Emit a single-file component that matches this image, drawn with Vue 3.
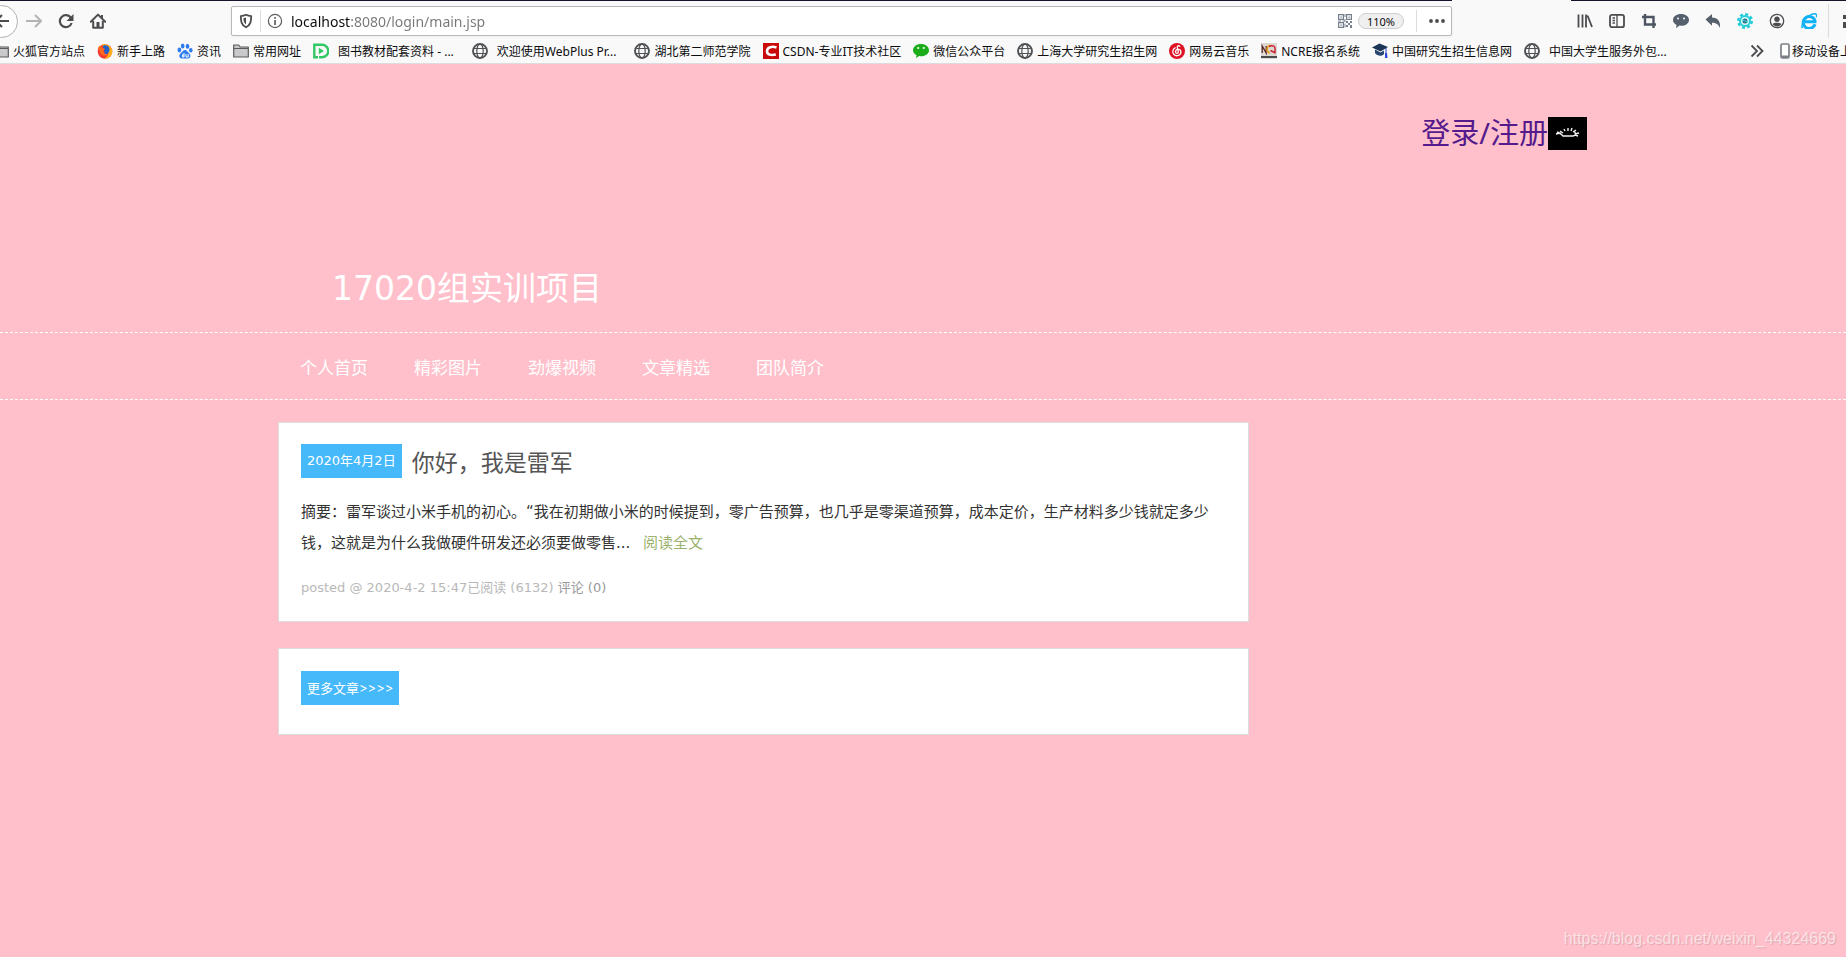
<script setup>
import { ref } from 'vue'

const address = ref('localhost:8080/login/main.jsp')

const bookmarks = [
  { icon: 'folder', label: '火狐官方站点' },
  { icon: 'firefox', label: '新手上路' },
  { icon: 'paw', label: '资讯' },
  { icon: 'folder', label: '常用网址' },
  { icon: 'play', label: '图书教材配套资料 - ...', wide: true },
  { icon: 'globe', label: '欢迎使用WebPlus Pr...', wide: true },
  { icon: 'globe', label: '湖北第二师范学院' },
  { icon: 'csdn', label: 'CSDN-专业IT技术社区' },
  { icon: 'chat', label: '微信公众平台' },
  { icon: 'globe', label: '上海大学研究生招生网' },
  { icon: 'music', label: '网易云音乐' },
  { icon: 'ncre', label: 'NCRE报名系统' },
  { icon: 'cap', label: '中国研究生招生信息网' },
  { icon: 'globe', label: '中国大学生服务外包...', wide: true },
]

const tools = [
  { icon: 'library', label: '书库' },
  { icon: 'sidebar', label: '侧栏' },
  { icon: 'crop', label: '截图' },
  { icon: 'bubble', label: '聊天' },
  { icon: 'undo', label: '撤销' },
  { icon: 'gear', label: '设置' },
  { icon: 'account', label: '账户' },
  { icon: 'ie', label: 'IE' },
]

const menu = ['个人首页', '精彩图片', '劲爆视频', '文章精选', '团队简介']
</script>

<template>
  <svg class="sprite" aria-hidden="true">
    <symbol id="i-back" viewBox="0 0 16 16"><path d="M15 8H2M8 2L2 8l6 6" fill="none" stroke="#4c4c4f" stroke-width="2" /></symbol>
    <symbol id="i-forward" viewBox="0 0 16 16"><path d="M0 8h14M9 2l6 6-6 6" fill="none" stroke="#b4b4b6" stroke-width="2" /></symbol>
    <symbol id="i-reload" viewBox="0 0 16 16"><path d="M13 5A6 6 0 1 0 13.600 10" fill="none" stroke="#4c4c4f" stroke-width="2.200" /><path d="M15.500 1v7H8.500z" fill="#4c4c4f" /></symbol>
    <symbol id="i-home" viewBox="0 0 16 16"><path d="M.8 8.800L8 1.600l7.200 7.200" fill="none" stroke="#4c4c4f" stroke-width="2" stroke-linecap="round" stroke-linejoin="round" /><path d="M3.200 8v6.800h9.600V8" fill="none" stroke="#4c4c4f" stroke-width="2" stroke-linejoin="round" /><path d="M6.500 9h3v6h-3zM11 2h2v4l-2-2z" fill="#4c4c4f" /></symbol>
    <symbol id="i-shield" viewBox="0 0 16 16"><path d="M8 1.800c1.800.9 3.600 1.200 5.200 1.300 0 5.400-.6 9-5.200 11.200C3.400 12.100 2.800 8.500 2.800 3.100 4.400 3 6.200 2.700 8 1.800z" fill="none" stroke="#4c4c4f" stroke-width="1.800" stroke-linejoin="round" /><path d="M8 4.500v7C6 10 5.500 8 5.400 5.200z" fill="#4c4c4f" /></symbol>
    <symbol id="i-info" viewBox="0 0 16 16"><circle cx="8" cy="8" r="6.600" fill="none" stroke="#5f5f62" stroke-width="1.200" /><path d="M7.200 7h1.700v5H7.200zM7.200 4h1.700v1.700H7.200z" fill="#5f5f62" /></symbol>
    <symbol id="i-qr" viewBox="0 0 14 14"><path d="M.6.6h4.800v4.800H.6zM8.600.6h4.800v4.800H8.600zM.6 8.600h4.800v4.800H.6z" fill="none" stroke="#75808d" stroke-width="1.200" /><path d="M2.400 2.400h1.400v1.400H2.400zM10.400 2.400h1.400v1.400h-1.400zM2.400 10.400h1.400v1.400H2.400zM6.500 0h1v3h-1zM6.500 5h1v3h-1zM0 6.500h3v1H0zM4.500 6.500h2v1h-2zM8 7h2v2H8zM10 9h2v2h-2zM12 7h2v2h-2zM8 11h2v2H8zM12 11h2v3h-2zM6.500 9.500h1v4h-1z" fill="#75808d" /></symbol>
    <symbol id="i-dots" viewBox="0 0 16 16"><g fill="#4c4c4f"><circle cx="2" cy="8" r="1.900" /><circle cx="8" cy="8" r="1.900" /><circle cx="14" cy="8" r="1.900" /></g></symbol>
    <symbol id="i-library" viewBox="0 0 16 16"><path d="M1.500 1.500v13M5.500 1.500v13M9 1.500v13M10.500 2.500L15 14" fill="none" stroke="#4c4c4f" stroke-width="1.800" /></symbol>
    <symbol id="i-sidebar" viewBox="0 0 16 16"><rect x="1" y="1.800" width="14" height="12.400" rx="2" fill="none" stroke="#4c4c4f" stroke-width="1.800" /><path d="M8 2v12M3.500 5H6M3.500 7.500H6M3.500 10H6" stroke="#4c4c4f" stroke-width="1.300" /></symbol>
    <symbol id="i-crop" viewBox="0 0 16 16"><path d="M4 1v10.500h8.500M1 4h11.500v11M12.500 11.500H15" fill="none" stroke="#4c5561" stroke-width="2.400" /></symbol>
    <symbol id="i-bubble" viewBox="0 0 16 16"><path d="M8 1c4.500 0 8 2.400 8 5.900s-3.500 5.800-8 5.800l-1.500-.1L3 15.200l.6-3.300C1.300 10.800 0 9 0 7c0-3.600 3.500-6 8-6z" fill="#56606d" /><circle cx="5" cy="5.500" r="1" fill="#f9f9fa" /><circle cx="11" cy="5.500" r="1" fill="#f9f9fa" /></symbol>
    <symbol id="i-undo" viewBox="0 0 16 16"><path d="M.5 6.500l6.500-5.500v3.400c5.500.2 8.800 3.600 8 10.600-1.500-3.700-3.900-5.200-8-5.200v3z" fill="#56606d" /></symbol>
    <symbol id="i-gear" viewBox="0 0 16 16"><circle cx="8" cy="8" r="6.700" fill="none" stroke="#25cdd8" stroke-width="2.600" stroke-dasharray="3 2.260" /><circle cx="8" cy="8" r="5" fill="#dff8fa" stroke="#25cdd8" stroke-width="2" /><circle cx="8" cy="8" r="2.500" fill="#2d7185" /><path d="M5 7l6 2" stroke="#3ddbe4" /></symbol>
    <symbol id="i-account" viewBox="0 0 16 16"><circle cx="8" cy="8" r="6.700" fill="none" stroke="#4c4c4f" stroke-width="1.300" /><circle cx="8" cy="6.300" r="2.700" fill="#4c4c4f" /><path d="M3.500 11c1.500-1.700 7.500-1.700 9 0-2 3.200-7 3.200-9 0z" fill="#4c4c4f" /></symbol>
    <symbol id="i-ie" viewBox="0 0 16 16"><path d="M14 11.200A6 6 0 1 1 14 7.800v1H4" fill="none" stroke="#10b1f5" stroke-width="3" /><path d="M1.500 15C-1 12 6 1.500 13.500.8c2-.2 2.600 1.200 1.800 3.400" fill="none" stroke="#10b1f5" stroke-width="1.400" /></symbol>
    <symbol id="i-folder" viewBox="0 0 16 16"><path d="M.7 14V2h5l1.500 2h8.100v10z" fill="#c9c9cb" stroke="#5b5b5e" stroke-width="1.200" stroke-linejoin="round" /><path d="M1 5.500h14" stroke="#5b5b5e" /></symbol>
    <symbol id="i-firefox" viewBox="0 0 16 16"><circle cx="8" cy="8.500" r="7.300" fill="#f2382f" /><path d="M5 1.500C9 0 15.500 3 15.300 9c-.4 5-5 7-8.500 6.500C11 14 12 11 11 8 9 4 6 5 5 1.500z" fill="#ffb01f" /><path d="M6.500 2.500C10 1.500 13 4 12.500 7.500c-.5 3-3.500 4.500-5.500 3.500 1-1 1-2 0-3-1-2-1.500-4-.5-5.500z" fill="#2160c8" /><path d="M.8 5L3 2.500 6 5l2 1-2 2 2 3 3 0c-2 3-7 2-8-2z" fill="#ff6a20" /></symbol>
    <symbol id="i-paw" viewBox="0 0 16 16"><g fill="#2f7cf0"><ellipse cx="2.400" cy="7" rx="1.900" ry="2.400" /><ellipse cx="5.700" cy="3" rx="1.800" ry="2.500" /><ellipse cx="10.500" cy="3.200" rx="1.800" ry="2.500" /><ellipse cx="13.800" cy="7.200" rx="1.800" ry="2.300" /><path d="M8 7c2 0 2.700 2 4.300 3.500 2 1.800 1.200 5-1.300 5-1.500 0-4.500 0-6 0-3 0-3.500-3.500-1.500-5C5.300 9 6 7 8 7z" /></g><path d="M7 10v4H5.500v-2.200H7M9 11v3h2.200v-3" fill="none" stroke="#fff" /></symbol>
    <symbol id="i-play" viewBox="0 0 16 16"><path d="M5 14.300H1.300V1.700H9a6 6 0 0 1 0 12.600H6" fill="none" stroke="#32c864" stroke-width="2.400" /><path d="M5.800 4.800L11 8l-5.200 3.200z" fill="#32c864" /></symbol>
    <symbol id="i-globe" viewBox="0 0 16 16"><circle cx="8" cy="8" r="7" fill="none" stroke="#4f5255" stroke-width="1.900" /><ellipse cx="8" cy="8" rx="3.200" ry="7" fill="none" stroke="#4f5255" stroke-width="1.200" /><path d="M1.500 5.500h13M1.500 10.500h13" stroke="#4f5255" stroke-width="1.200" /></symbol>
    <symbol id="i-csdn" viewBox="0 0 16 16"><path d="M0 0h16v16H0z" fill="#c90a0a" /><path d="M13.500 4.500C9 3 4.300 4 4 8c-.2 4 4.500 4.500 8.800 3.500" fill="none" stroke="#fff" stroke-width="2.600" /></symbol>
    <symbol id="i-chat" viewBox="0 0 16 16"><path d="M8 1c4.500 0 8 2.700 8 6.300s-3.500 6-8 6l-1.800-.2L3 15l.5-2.800C1.300 11 0 9.300 0 7.300 0 3.700 3.500 1 8 1z" fill="#1aad19" /><circle cx="5.200" cy="5" r="1.100" fill="#fff" /><circle cx="10.800" cy="5" r="1.100" fill="#fff" /></symbol>
    <symbol id="i-music" viewBox="0 0 16 16"><circle cx="8" cy="8" r="8" fill="#dd1224" /><path d="M10.800 3.200C9.500 2.200 8 3 8.300 4.500l1 4.200c.3 2-2.600 2.200-2.700.3C6.500 7 8 6 9.800 6.300c3 .6 3 5.700-1.300 6.400-3 .4-5-2-4.700-4.500.2-1.600 1-2.800 2.400-3.400" fill="none" stroke="#fff" stroke-width="1.300" stroke-linecap="round" /></symbol>
    <symbol id="i-ncre" viewBox="0 0 16 16"><path d="M0 0h16v16H0z" fill="#ddd9d2" /><path d="M1.200 10V3l4 7V3" fill="none" stroke="#5a2926" stroke-width="1.300" /><path d="M10 2.500C5 2.500 5 10 9 9.500" fill="none" stroke="#e3a226" stroke-width="1.700" /><path d="M8 3.500c4-2 6.500 0 6 3v4M9.500 7.500l4 2" fill="none" stroke="#cb2435" stroke-width="1.500" /><path d="M0 13h16v2H0z" fill="#4b4b4b" /></symbol>
    <symbol id="i-cap" viewBox="0 0 16 16"><path d="M0 4.500L7.500.5 16 4l-7.500 4.500z" fill="#1d3557" /><path d="M3 6.500l5.500 3L12 7.500V11c-2 3-7 2-9-1z" fill="#25466e" /><path d="M14 5v5" stroke="#2c3fb5" /><path d="M13 10h2l.5 5H13z" fill="#3049d8" /></symbol>
    <symbol id="i-phone" viewBox="0 0 10 16"><rect x="1" y="1" width="8" height="14" rx="1.500" fill="#fff" stroke="#7b8087" stroke-width="1.700" /><path d="M1 12.500h8V15H1z" fill="#7b8087" /></symbol>
    <symbol id="i-more" viewBox="0 0 14 14"><path d="M1.500 1.500L7 7l-5.500 5.500M7 1.500L12.500 7 7 12.500" fill="none" stroke="#4c4c4f" stroke-width="1.800" /></symbol>
    <symbol id="i-menu" viewBox="0 0 16 16"><path d="M1 2h15v4H1zM1 9h4v6H1z" fill="#4c4c4f" /></symbol>
  </svg>

  <header class="browser">
    <div class="tabs"><span class="tab-rest"></span><span class="tab-current"></span><span class="tab-end"></span></div>
    <div class="toolbar">
      <div class="history">
        <button class="back" aria-label="后退"><svg class="icon"><use href="#i-back" /></svg></button>
        <button class="plain" aria-label="前进"><svg class="icon"><use href="#i-forward" /></svg></button>
        <button class="plain" aria-label="刷新"><svg class="icon"><use href="#i-reload" /></svg></button>
        <button class="plain" aria-label="主页"><svg class="icon"><use href="#i-home" /></svg></button>
      </div>
      <div class="address">
        <svg class="icon"><use href="#i-shield" /></svg>
        <span class="rule"></span>
        <svg class="icon"><use href="#i-info" /></svg>
        <input v-model="address" class="url" type="text" aria-label="地址" />
        <svg class="qr"><use href="#i-qr" /></svg>
        <button class="zoom">110%</button>
        <span class="rule"></span>
        <button class="dots" aria-label="页面操作"><svg class="icon"><use href="#i-dots" /></svg></button>
      </div>
      <div class="tools">
        <button v-for="t in tools" :key="t.icon" class="plain" :aria-label="t.label"><svg class="icon"><use :href="'#i-' + t.icon" /></svg></button>
        <span class="rule tall"></span>
        <button class="edge" aria-label="菜单"><svg class="icon"><use href="#i-menu" /></svg></button>
      </div>
    </div>
    <nav class="bookmarks" aria-label="书签">
      <ul class="marks">
        <li v-for="b in bookmarks" :key="b.label">
          <a href="#" class="mark" :class="{ wide: b.wide }"><svg class="icon"><use :href="'#i-' + b.icon" /></svg>{{ b.label }}</a>
        </li>
      </ul>
      <div class="overflow">
        <button class="more" aria-label="更多书签"><svg class="more-icon"><use href="#i-more" /></svg></button>
        <a href="#" class="mobile"><svg class="phone"><use href="#i-phone" /></svg>移动设备上</a>
      </div>
    </nav>
  </header>

  <main class="page">
    <div class="login">
      <a href="#" class="login-link">登录/注册</a>
      <svg class="login-pic" viewBox="0 0 39 33" aria-hidden="true">
        <path d="M0 0h39v33H0z" fill="#000" />
        <path d="M8 17l4-1 3 3h10c3 0 3-3 1-5M9 15l4 2M12 14l3 2M16 12l1 2M20 11v3M24 11l-1 3M28 13l-3 2M31 16l-4 1M30 19l-3-1" fill="none" stroke="#f2f2f2" stroke-width="1.400" />
      </svg>
    </div>
    <div class="container"><h1 class="title">17020组实训项目</h1></div>
    <nav class="menu" aria-label="导航">
      <ul class="container menu-list">
        <li v-for="m in menu" :key="m"><a href="#">{{ m }}</a></li>
      </ul>
    </nav>
    <div class="container posts">
      <article class="card">
        <div class="card-head">
          <span class="badge">2020年4月2日</span>
          <h2>你好，我是雷军</h2>
        </div>
        <p class="summary">摘要：雷军谈过小米手机的初心。“我在初期做小米的时候提到，零广告预算，也几乎是零渠道预算，成本定价，生产材料多少钱就定多少<br />钱，这就是为什么我做硬件研发还必须要做零售... <a href="#">阅读全文</a></p>
        <p class="meta">posted @ 2020-4-2 15:47已阅读 (6132) <a href="#">评论 (0)</a></p>
      </article>
      <section class="card more-card"><a href="#" class="badge more-link">更多文章&gt;&gt;&gt;&gt;</a></section>
    </div>
    <footer class="credit">https://blog.csdn.net/weixin_44324669</footer>
  </main>
</template>

<style>
html,
body {
  background: #ffc0cb;
}
#app {
  min-height: 100vh;
  display: flex;
  flex-direction: column;
  overflow-x: hidden;
}
</style>

<style scoped>
* {
  box-sizing: border-box;
}
button {
  border: 0;
  padding: 0;
  background: none;
  font: inherit;
  color: inherit;
  flex: none;
  display: flex;
  align-items: center;
  justify-content: center;
}
ul,
h1,
h2,
p {
  margin: 0;
  padding: 0;
  list-style: none;
  font-weight: 400;
}
a {
  text-decoration: none;
  color: inherit;
}
.sprite {
  position: absolute;
  width: 0;
  height: 0;
}
.icon {
  width: 16px;
  height: 16px;
  flex: none;
}

.browser {
  background: #f9f9fa;
  border-bottom: 1px solid #dcdcde;
  font-family: "Noto Sans", "Noto Sans CJK SC", sans-serif;
  font-size: 12px;
  color: #0c0c0d;
  overflow: hidden;
}
.tabs {
  display: flex;
  height: 1px;
}
.tab-rest {
  flex: 1;
  background: #15142a;
}
.tab-current {
  width: 119px;
}
.tab-end {
  width: 275px;
  background: #15142a;
}
.toolbar {
  display: flex;
  align-items: center;
  height: 40px;
  gap: 117px;
}
.history {
  display: flex;
  align-items: center;
  margin-left: -15px;
}
.back {
  width: 33px;
  height: 33px;
  border: 1px solid #b1b1b3;
  border-radius: 50%;
  background: #fff;
}
.plain {
  width: 32px;
  height: 32px;
}
.address {
  flex: 1;
  min-width: 0;
  display: flex;
  align-items: center;
  gap: 6px;
  height: 30px;
  padding: 0 6px;
  border: 1px solid #b8b8ba;
  border-radius: 2px;
  background: #fff;
  box-shadow: 0 1px 3px #0000000d;
}
.rule {
  flex: none;
  width: 1px;
  height: 22px;
  background: #dcdcde;
}
.url {
  flex: 1;
  min-width: 0;
  border: 0;
  padding: 0 0 0 2px;
  outline: 0;
  height: 22px;
  font: 14px "Noto Sans", sans-serif;
  color: transparent;
  background: linear-gradient(90deg, #0c0c0d 62px, #77777a 62px);
  background-clip: text;
}
.qr {
  width: 14px;
  height: 14px;
  flex: none;
}
.zoom {
  width: 46px;
  height: 16px;
  border: 1px solid #cfcfd1;
  border-radius: 8px;
  background: #efeff0;
  font-size: 11px;
  margin-right: 6px;
}
.dots {
  margin-left: 6px;
}
.tools {
  display: flex;
  align-items: center;
  flex: none;
  width: 277px;
  overflow: hidden;
}
.tall {
  height: 34px;
  margin-left: 3px;
}
.edge {
  margin-left: 13px;
}
.bookmarks {
  display: flex;
  align-items: center;
  height: 22px;
  padding-bottom: 2px;
  white-space: nowrap;
}
.marks {
  display: flex;
  flex: 1;
  min-width: 0;
  gap: 12px;
  margin-left: -7px;
  overflow: hidden;
}
.mark {
  display: flex;
  align-items: center;
  gap: 4px;
}
.mark.wide {
  gap: 9px;
  padding-right: 6px;
}
.overflow {
  display: flex;
  align-items: center;
  gap: 16px;
  width: 96px;
  flex: none;
  overflow: hidden;
}
.more-icon {
  width: 14px;
  height: 14px;
}
.mobile {
  display: flex;
  align-items: center;
  gap: 2px;
}
.phone {
  width: 10px;
  height: 16px;
  flex: none;
}

.page {
  flex: 1;
  display: flex;
  flex-direction: column;
  background: #ffc0cb;
  font-family: "DejaVu Sans", "Noto Sans CJK SC", sans-serif;
}
.container {
  width: 100%;
  max-width: 1290px;
  margin: 0 auto;
}
.login {
  display: flex;
  justify-content: flex-end;
  align-items: center;
  width: 100%;
  max-width: 1328px;
  height: 42px;
  margin: 48px auto 0;
}
.login-link {
  padding-bottom: 4px;
  font: 29px "Noto Sans", "Noto Sans CJK SC", sans-serif;
  color: #551a8b;
}
.login-pic {
  width: 39px;
  height: 33px;
}
.title {
  margin: 111px 0 19px;
  padding-left: 54px;
  font-size: 33px;
  line-height: 48px;
  color: #fff;
}
.menu {
  border-top: 1px dashed #fff;
  border-bottom: 1px dashed #fff;
  color: #fff;
}
.menu-list {
  display: flex;
  gap: 46px;
  padding: 4px 0 0 22px;
  font-size: 17px;
  line-height: 62px;
}
.posts {
  display: flex;
  flex-direction: column;
  gap: 26px;
  padding-top: 22px;
}
.card {
  width: 971px;
  max-width: 100%;
  padding: 21px 22px;
  border: 1px solid #ddd;
  background: #fff;
}
.card-head {
  display: flex;
  align-items: flex-start;
  gap: 10px;
}
.badge {
  display: inline-block;
  padding: 0 6px;
  background: #46b9fb;
  color: #fff;
  font-size: 13px;
  line-height: 34px;
}
h2 {
  font-size: 23px;
  line-height: 38px;
  color: #555;
}
.summary {
  margin-top: 15px;
  font-size: 15px;
  line-height: 31px;
  color: #333;
}
.summary a {
  margin-left: 8px;
  color: #9ab26b;
}
.meta {
  margin-top: 17px;
  font-size: 13px;
  line-height: 24px;
  color: #b8b8b8;
}
.meta a {
  color: #999;
}
.more-card {
  padding: 22px 22px 29px;
  line-height: 0;
}
.more-link {
  font-family: Inter, "Noto Sans CJK SC", sans-serif;
}
.credit {
  margin-top: auto;
  padding: 0 10px 9px;
  text-align: right;
  font: 16px "Liberation Sans", Arial, sans-serif;
  color: #fff9;
  text-shadow: 1px 1px 1px #0002;
}
</style>
